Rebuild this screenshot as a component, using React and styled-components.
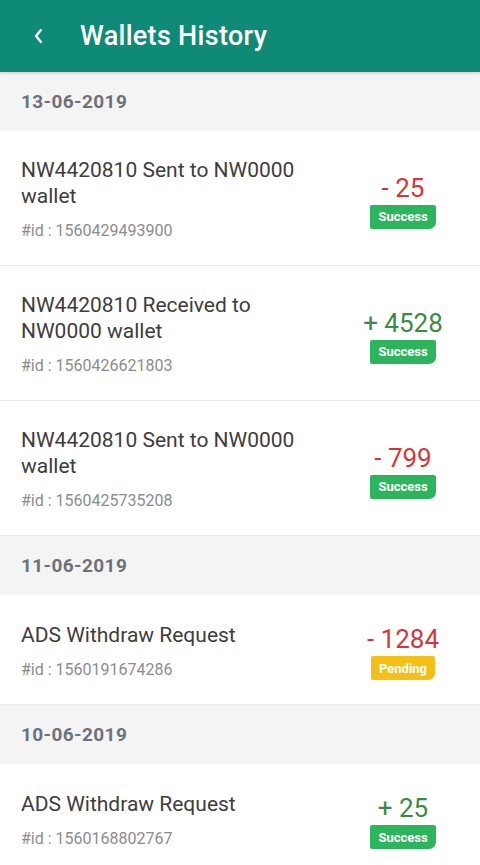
import React from 'react';
import styled, { createGlobalStyle } from 'styled-components';

const GlobalStyle = createGlobalStyle`
  body {
    margin: 0;
    background: #ffffff;
    font-family: Roboto, "Liberation Sans", sans-serif;
  }
`

const Page = styled.div`
  width: 480px;
  min-height: 865px;
  background: #ffffff;
`

const Header = styled.header`
  height: 72px;
  background: #0e8a77;
  display: flex;
  align-items: center;
  padding-left: 30px;
  box-shadow: 0 1px 3px rgba(0, 0, 0, 0.18);
  position: relative;
`

const BackButton = styled.button`
  width: 16px;
  height: 24px;
  padding: 0;
  border: none;
  background: none;
  display: flex;
  align-items: center;
  justify-content: center;
  margin-right: 34px;
`

const Title = styled.h1`
  margin: 0;
  color: #ffffff;
  font-size: 27px;
  font-weight: 500;
  letter-spacing: 0.3px;
`

const DateBar = styled.div`
  height: 59px;
  background: #f4f4f5;
  display: flex;
  align-items: center;
  padding-left: 21px;
  color: #6c7279;
  font-size: 19px;
  font-weight: 700;
  letter-spacing: 0.4px;
`

const Row = styled.div`
  display: flex;
  align-items: center;
  justify-content: space-between;
  padding: 26px 0 24px 21px;
  border-bottom: 1px solid #ececec;
`

const Info = styled.div`
  max-width: 300px;
`

const RowTitle = styled.div`
  color: #3d3d3d;
  font-size: 21px;
  line-height: 26px;
`

const RowId = styled.div`
  margin-top: 12px;
  color: #8c8c8c;
  font-size: 16px;
  line-height: 20px;
`

const Side = styled.div`
  width: 112px;
  margin-right: 21px;
  padding-top: 3px;
  display: flex;
  flex-direction: column;
  align-items: center;
`

const Amount = styled.div`
  font-size: 26px;
  line-height: 30px;
  color: ${p => (p.credit ? '#3a8c44' : '#d8343c')};
`

const Badge = styled.div`
  margin-top: 2px;
  height: 24px;
  padding: 0 8px;
  display: flex;
  align-items: center;
  color: #ffffff;
  font-size: 13px;
  font-weight: 700;
  background: ${p => (p.status === 'Pending' ? '#f5c016' : '#2db55d')};
  border-radius: 2px 2px 7px 2px;
`

const Chevron = () => (
  <svg width="10" height="16" viewBox="0 0 10 16">
    <path d="M8 2 L3 8 L8 14" fill="none" stroke="#ffffff" strokeWidth="2.3" strokeLinecap="round" strokeLinejoin="round" />
  </svg>
)

const history = [
  {
    date: '13-06-2019',
    items: [
      { title: 'NW4420810 Sent to NW0000 wallet', id: '1560429493900', amount: '- 25', credit: false, status: 'Success' },
      { title: 'NW4420810 Received to NW0000 wallet', id: '1560426621803', amount: '+ 4528', credit: true, status: 'Success' },
      { title: 'NW4420810 Sent to NW0000 wallet', id: '1560425735208', amount: '- 799', credit: false, status: 'Success' },
    ],
  },
  {
    date: '11-06-2019',
    items: [
      { title: 'ADS Withdraw Request', id: '1560191674286', amount: '- 1284', credit: false, status: 'Pending' },
    ],
  },
  {
    date: '10-06-2019',
    items: [
      { title: 'ADS Withdraw Request', id: '1560168802767', amount: '+ 25', credit: true, status: 'Success' },
    ],
  },
]

const App = () => {
  return (
    <Page>
      <GlobalStyle />
      <Header>
        <BackButton><Chevron /></BackButton>
        <Title>Wallets History</Title>
      </Header>

      {history.map(group => (
        <section key={group.date}>
          <DateBar>{group.date}</DateBar>
          {group.items.map(item => (
            <Row key={item.id}>
              <Info>
                <RowTitle>{item.title}</RowTitle>
                <RowId>#id : {item.id}</RowId>
              </Info>
              <Side>
                <Amount credit={item.credit}>{item.amount}</Amount>
                <Badge status={item.status}>{item.status}</Badge>
              </Side>
            </Row>
          ))}
        </section>
      ))}
    </Page>
  )
}

export default App;
